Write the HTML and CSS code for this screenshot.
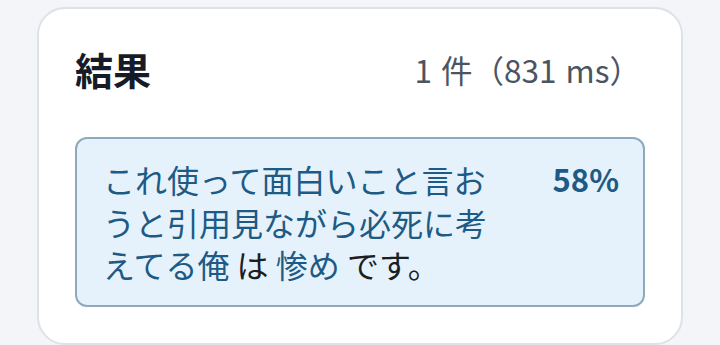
FILE: index.html
```html
<!DOCTYPE html>
<html lang="ja">
<head>
    <meta charset="UTF-8">
    <meta name="viewport" content="width=device-width, initial-scale=1.0">
    <title>結果</title>
    <link rel="stylesheet" href="styles.css">
</head>
<body>
    <div class="result-card">
        <div class="result-header">
            <h2>結果</h2>
            <span class="result-meta">1 件（831 ms）</span>
        </div>
        <div class="hit">
            <p class="hit-text"><span class="match">これ使って面白いこと言おうと引用見ながら必死に考えてる俺</span> は <span class="match">惨め</span> です。</p>
            <span class="hit-score">58%</span>
        </div>
    </div>
</body>
</html>
```

FILE: styles.css
```css
body {
    margin: 0;
    padding: 7px 37px 0 37px;
    background-color: #f3f5f8;
    font-family: "Noto Sans CJK JP", "Noto Sans", sans-serif;
}
.result-card {
    background-color: #fff;
    border: 2px solid #dde2e9;
    border-radius: 28px;
    padding: 33px 36px 36px 36px;
    height: 338px;
    box-sizing: border-box;
}
.result-header {
    display: flex;
    justify-content: space-between;
    align-items: center;
    margin-bottom: 42px;
}
.result-header h2 {
    margin: 0;
    font-size: 38px;
    font-weight: 700;
    color: #161c27;
    line-height: 1.4;
}
.result-meta {
    font-size: 31.5px;
    color: #4b5562;
    margin-right: 4px;
    word-spacing: 2px;
}
.hit {
    display: grid;
    grid-template-columns: 1fr auto;
    column-gap: 40px;
    background-color: #e6f2fb;
    border: 2px solid #8fa9bb;
    border-radius: 12px;
    padding: 19px 24px 19px 26px;
}
.hit-text {
    margin: 0;
    font-size: 32px;
    line-height: 42.5px;
    color: #1b1f24;
}
.match {
    color: #1d5a85;
}
.hit-score {
    font-size: 31px;
    font-weight: 700;
    color: #1d5a85;
    line-height: 42px;
}
```
